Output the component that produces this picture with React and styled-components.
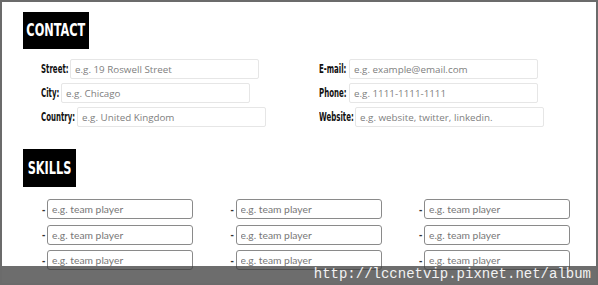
import React from 'react';
import styled, { createGlobalStyle } from 'styled-components';

const GlobalStyle = createGlobalStyle`
  html, body { margin: 0; padding: 0; background: #fff; }
  * { box-sizing: border-box; }
`;

const Frame = styled.div`
  position: relative;
  width: 598px;
  height: 285px;
  border: 2px solid #6b6b6b;
  overflow: hidden;
  padding: 10px 0 0 21px;
  background: #fff;
`;

const Heading = styled.h2`
  display: flex;
  justify-content: center;
  margin: 0;
  width: ${p => p.$w}px;
  height: ${p => p.$h}px;
  line-height: ${p => p.$h}px;
  background: #000;
  color: #fff;
  font-family: "DejaVu Sans Condensed", sans-serif;
  font-weight: bold;
  font-size: 17px;
  white-space: nowrap;
`;

const Squeeze = styled.span`
  display: inline-block;
  white-space: nowrap;
  transform: scaleX(${p => p.$x});
  transform-origin: ${p => p.$origin || 'center'};
`;

const ContactGrid = styled.div`
  display: grid;
  grid-template-columns: 278px 278px;
  row-gap: 4px;
  margin: 10px 0 22px 18px;
`;

const Field = styled.div`
  display: flex;
  align-items: center;
  gap: 3px;
`;

const Label = styled.label`
  display: inline-block;
  width: ${p => p.$w}px;
  font-family: "DejaVu Sans Condensed", sans-serif;
  font-weight: bold;
  font-size: 12px;
  color: #111;
`;

const TextInput = styled.input`
  width: 189px;
  height: 20px;
  border: 1px solid #e6e6e6;
  border-radius: 2px;
  padding: 0 4px;
  font-family: "Open Sans", sans-serif;
  font-size: 9.8px;
  outline: none;
  &::placeholder { color: #808080; }
`;

const SkillGrid = styled.div`
  display: grid;
  grid-template-columns: repeat(3, 188.5px);
  row-gap: 5.5px;
  margin: 12px 0 0 19px;
`;

const Skill = styled.div`
  display: flex;
  align-items: center;
  gap: 1px;
`;

const Dash = styled.span`
  font-family: "Liberation Sans", sans-serif;
  font-weight: bold;
  font-size: 10px;
  color: #333;
  width: 4px;
`;

const SkillInput = styled.input`
  width: 146px;
  height: 20px;
  border: 1px solid #8a8a8a;
  border-radius: 3px;
  padding: 0 4px;
  font-family: Lato, sans-serif;
  font-size: 10.3px;
  outline: none;
  &::placeholder { color: #777; }
`;

const Watermark = styled.div`
  position: absolute;
  left: 0;
  right: 0;
  bottom: 0;
  height: 17px;
  background: rgba(60, 60, 60, 0.75);
  color: #f2f2f2;
  font-family: "Liberation Mono", monospace;
  font-size: 14px;
  line-height: 17px;
  text-align: right;
  padding-right: 5px;
`;

const contact = [
  [['Street:', 26, 'e.g. 19 Roswell Street'], ['E-mail:', 27, 'e.g. example@email.com']],
  [['City:', 17, 'e.g. Chicago'], ['Phone:', 27, 'e.g. 1111-1111-1111']],
  [['Country:', 33, 'e.g. United Kingdom'], ['Website:', 33, 'e.g. website, twitter, linkedin.']],
];

export default function App() {
  return (
    <>
      <GlobalStyle />
      <Frame>
        <Heading $w={66} $h={37}><Squeeze $x={0.74}>CONTACT</Squeeze></Heading>
        <ContactGrid>
          {contact.map(row =>
            row.map(([label, w, ph]) => (
              <Field key={label}>
                <Label $w={w}><Squeeze $x={0.65} $origin="left center">{label}</Squeeze></Label>
                <TextInput placeholder={ph} />
              </Field>
            ))
          )}
        </ContactGrid>
        <Heading $w={53} $h={38}><Squeeze $x={0.74}>SKILLS</Squeeze></Heading>
        <SkillGrid>
          {Array.from({ length: 9 }).map((_, i) => (
            <Skill key={i}>
              <Dash>-</Dash>
              <SkillInput placeholder="e.g. team player" />
            </Skill>
          ))}
        </SkillGrid>
        <Watermark>http://lccnetvip.pixnet.net/album</Watermark>
      </Frame>
    </>
  );
}
